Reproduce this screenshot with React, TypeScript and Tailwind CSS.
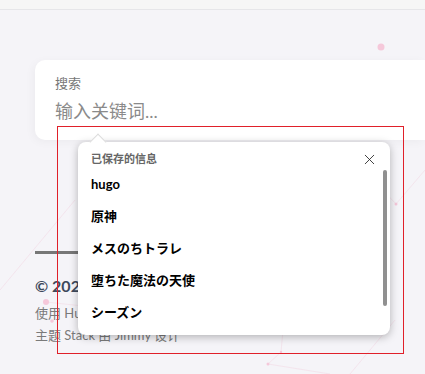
import { X } from 'lucide-react';

// 已保存的自动填充项
const savedItems = ['hugo', '原神', 'メスのちトラレ', '堕ちた魔法の天使', 'シーズン'];

const sans = "font-['Lato','Noto_Sans_CJK_SC','Noto_Sans_CJK_JP',sans-serif]";

function Backdrop() {
  // 背景上淡淡的粒子连线
  return (
    <svg className="absolute inset-0" width="425" height="374" viewBox="0 0 425 374">
      <g stroke="#f3d9e4" strokeWidth="0.8" fill="none" opacity="0.7">
        <line x1="0" y1="290" x2="75" y2="200" />
        <line x1="46" y1="302" x2="120" y2="310" />
        <line x1="396" y1="204" x2="425" y2="170" />
        <line x1="396" y1="204" x2="360" y2="166" />
        <line x1="281" y1="352" x2="283" y2="330" />
        <line x1="281" y1="352" x2="268" y2="364" />
        <line x1="268" y1="364" x2="330" y2="374" />
        <line x1="350" y1="374" x2="395" y2="320" />
      </g>
      <g fill="#f5c8da">
        <circle cx="381" cy="47" r="3.5" />
        <circle cx="46" cy="302" r="3" />
        <circle cx="52" cy="321" r="1.8" />
        <circle cx="396" cy="204" r="1.5" />
        <circle cx="281" cy="352" r="1.2" />
        <circle cx="268" cy="364" r="1.5" />
      </g>
    </svg>
  );
}

export default function App() {
  return (
    <div className={`relative w-[425px] h-[374px] overflow-hidden bg-[#f5f4f8] ${sans}`}>
      <Backdrop />

      <div className="relative">
        <div className="h-[10px] bg-[#f6f6f6] border-b border-[#e6e6e9]" />

        {/* 搜索卡片 */}
        <div className="ml-[35px] mt-[50px] h-[80px] bg-white rounded-l-[10px] shadow-[-2px_2px_10px_rgba(0,0,0,0.04)] pl-[20px] pt-[13px]">
          <div className="text-[13px] leading-[20px] text-[#777]">搜索</div>
          <div className="mt-[6px] text-[18px] leading-[24px] text-[#8a8a8a]">输入关键词...</div>
        </div>

        {/* 页脚 */}
        <footer className="ml-[35px] mt-[111px]">
          <div className="w-[60px] h-[3px] bg-[#777]" />
          <div className="mt-[22px] text-[16px] leading-[20px] font-bold text-[#3e4a5c]">© 2025 Hugo</div>
          <div className="mt-[7px] text-[13px] leading-[20px] text-[#7a7a7a]">使用 Hugo 构建</div>
          <div className="mt-[2px] text-[13px] leading-[20px] text-[#7a7a7a]">主题 Stack 由 Jimmy 设计</div>
        </footer>
      </div>

      {/* 选区红框 */}
      <div className="absolute left-[57px] top-[126px] w-[347px] h-[228px] border border-[#e0202a]" />

      {/* 自动填充弹窗 */}
      <div className="absolute left-[78px] top-[142px] w-[312px] h-[193px] bg-white rounded-[8px] shadow-[0_2px_8px_rgba(0,0,0,0.28)]">
        <div className="absolute left-[14px] -top-[6px] w-[12px] h-[12px] bg-white rotate-45 border-l border-t border-[#dcdcdc]" />
        <div className="relative flex items-center justify-between pl-[13px] pr-[12px] pt-[9px] h-[26px]">
          <span className="text-[11px] font-semibold text-[#666]">已保存的信息</span>
          <X size={17} strokeWidth={1.2} className="text-[#222]" />
        </div>
        <ul className="mt-[1px]">
          {savedItems.map(item => (
            <li key={item} className="h-[32px] pl-[13px] flex items-center text-[13px] font-bold text-black">
              {item}
            </li>
          ))}
        </ul>
        <div className="absolute left-[305px] top-[28px] w-[4px] h-[136px] rounded-full bg-[#909090]" />
      </div>
    </div>
  );
}
